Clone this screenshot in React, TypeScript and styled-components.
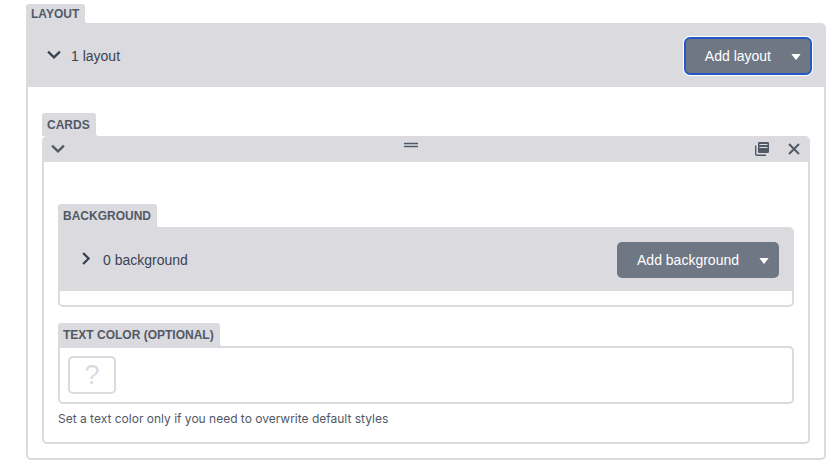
import React from 'react';
import styled, { createGlobalStyle, css } from 'styled-components';

const color = {
  line: '#dadadf',
  label: '#525966',
  text: '#3c4350',
  button: '#6f7785',
  focus: '#2358c5',
};

const GlobalStyle = createGlobalStyle`
  *, *::before, *::after { box-sizing: border-box; }
  body {
    margin: 0;
    background: #fff;
    font-family: 'Liberation Sans', Arial, sans-serif;
    color: ${color.text};
  }
  button { font: inherit; border: 0; padding: 0; background: none; cursor: pointer; }
`;

const Page = styled.main`
  padding: 4px 13px 12px 26px;
`;

const Field = styled.section`
  display: flex;
  flex-direction: column;
  align-items: flex-start;
`;

const tab = css`
  position: relative;
  display: block;
  height: 23px;
  padding: 1px 6px 0 5px;
  border-radius: 3px 3px 0 0;
  background: ${color.line};
  color: ${color.label};
  font-size: 12px;
  font-weight: 700;
  line-height: 23px;
  text-transform: uppercase;
  white-space: nowrap;

  &::after {
    content: '';
    position: absolute;
    left: 100%;
    bottom: 0;
    width: 3px;
    height: 3px;
    background: radial-gradient(circle at 100% 0, transparent 3px, ${color.line} 3px);
  }
`;

const Tab = styled.h2<{ $compact?: boolean }>`
  ${tab}
  margin: 0;
  ${(p) => p.$compact && css`
    height: 19px;
    line-height: 19px;
  `}
`;

const LabelTab = styled.label`
  ${tab}
`;

const Frame = styled.div<{ $rounded?: boolean }>`
  align-self: stretch;
  border: 2px solid ${color.line};
  border-radius: ${(p) => (p.$rounded ? '5px' : '0 5px 5px 5px')};
`;

const ListHeader = styled.header`
  display: flex;
  align-items: center;
  justify-content: space-between;
  height: 62px;
  padding: 0 13px 0 17px;
  background: ${color.line};
`;

const Toggle = styled.button`
  display: flex;
  align-items: center;
  gap: 8px;
  color: ${color.text};
  font-size: 14px;
  line-height: 18px;
`;

const AddButton = styled.button<{ $focused?: boolean }>`
  display: flex;
  align-items: center;
  gap: 20px;
  height: 36px;
  padding: 0 10px 0 20px;
  border-radius: 5px;
  background: ${color.button};
  color: #fff;
  font-size: 14px;
  white-space: nowrap;
  ${(p) => p.$focused && css`
    outline: 2px solid ${color.focus};
    outline-offset: -1px;
    box-shadow: 0 0 0 2px #fff;
  `}
`;

const ListBody = styled.div`
  padding: 26px 14px 14px;
`;

const ItemBar = styled.header`
  display: flex;
  align-items: center;
  justify-content: space-between;
  height: 24px;
  padding: 0 6px 0 5px;
  background: ${color.line};
  color: ${color.label};
`;

const IconButton = styled.button`
  display: flex;
  color: inherit;
`;

const Actions = styled.div`
  display: flex;
  justify-content: flex-end;
  gap: 16px;
`;

const ItemBody = styled.div`
  display: flex;
  flex-direction: column;
  gap: 16px;
  padding: 42px 14px 14px;
`;

const EmptyList = styled.div`
  height: 14px;
`;

const ColorFrame = styled(Frame)`
  padding: 8px;
`;

const Swatch = styled.button`
  display: block;
  width: 48px;
  height: 38px;
  border: 2px solid ${color.line};
  border-radius: 5px;
  color: ${color.line};
  font-size: 27px;
  line-height: 34px;
  text-align: center;
`;

const Hint = styled.p`
  margin: 6px 0 0;
  color: ${color.label};
  font-family: Inter, sans-serif;
  font-size: 12px;
  line-height: 18px;
`;

const Chevron = ({ right = false }: { right?: boolean }) => (
  <svg width="18" height="18" viewBox="0 0 18 18" fill="none" stroke="currentColor" strokeWidth="2.3" aria-hidden="true">
    <path d={right ? 'M6.1 2L11.6 7.5L6.1 13' : 'M3.1 4.6L9 10.4L14.9 4.6'} />
  </svg>
);

const Caret = () => (
  <svg width="10" height="8" viewBox="0 0 10 8" aria-hidden="true">
    <path d="M1 2h8Q9.7 2 9.3 2.6L5.5 7.5Q5 8 4.5 7.5L.7 2.6Q.3 2 1 2Z" fill="currentColor" />
  </svg>
);

const Grip = () => (
  <svg width="14" height="18" viewBox="0 0 14 18" aria-hidden="true">
    <path d="M0 1h14v6H0Z" fill="#b7bbc4" />
    <path d="M0 2.5h14M0 5.5h14" stroke="currentColor" />
  </svg>
);

const CopyIcon = () => (
  <svg width="16" height="16" viewBox="0 0 16 16" aria-hidden="true">
    <path d="M1.7 3.5V12q0 1.2 1.2 1.2H12" fill="none" stroke="currentColor" strokeWidth="1.4" />
    <rect x="4" y="0" width="11" height="11" rx="1.3" fill="currentColor" />
    <path d="M5.5 2.5h8M5.5 5.5h8" stroke={color.line} strokeWidth="1" />
  </svg>
);

const CloseIcon = () => (
  <svg width="16" height="16" viewBox="0 0 16 16" aria-hidden="true">
    <path d="M3 2L13 12M13 2L3 12" stroke="currentColor" strokeWidth="2" />
  </svg>
);

export default function App() {
  return (
    <Page>
      <GlobalStyle />
      <Field>
        <Tab $compact>Layout</Tab>
        <Frame>
          <ListHeader>
            <Toggle type="button" aria-expanded="true">
              <Chevron />
              1 layout
            </Toggle>
            <AddButton type="button" $focused>
              Add layout
              <Caret />
            </AddButton>
          </ListHeader>
          <ListBody>
            <Field>
              <Tab>Cards</Tab>
              <Frame $rounded>
                <ItemBar>
                  <IconButton type="button" aria-label="Collapse card">
                    <Chevron />
                  </IconButton>
                  <Grip />
                  <Actions>
                    <IconButton type="button" aria-label="Duplicate card">
                      <CopyIcon />
                    </IconButton>
                    <IconButton type="button" aria-label="Remove card">
                      <CloseIcon />
                    </IconButton>
                  </Actions>
                </ItemBar>
                <ItemBody>
                  <Field>
                    <Tab>Background</Tab>
                    <Frame>
                      <ListHeader>
                        <Toggle type="button" aria-expanded="false">
                          <Chevron right />
                          0 background
                        </Toggle>
                        <AddButton type="button">
                          Add background
                          <Caret />
                        </AddButton>
                      </ListHeader>
                      <EmptyList />
                    </Frame>
                  </Field>
                  <Field>
                    <LabelTab htmlFor="text-color">Text color (optional)</LabelTab>
                    <ColorFrame>
                      <Swatch id="text-color" type="button">?</Swatch>
                    </ColorFrame>
                    <Hint>Set a text color only if you need to overwrite default styles</Hint>
                  </Field>
                </ItemBody>
              </Frame>
            </Field>
          </ListBody>
        </Frame>
      </Field>
    </Page>
  );
}
